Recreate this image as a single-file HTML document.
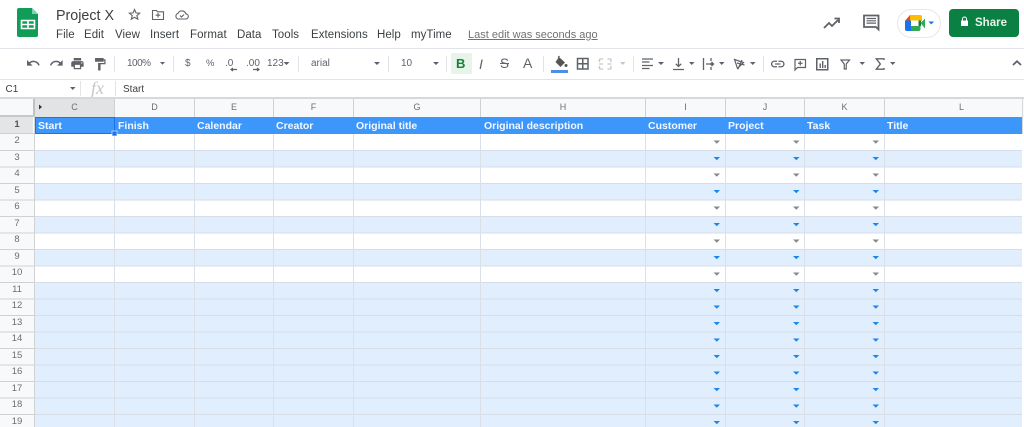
<!DOCTYPE html>
<html><head><meta charset="utf-8"><title>Project X</title>
<style>
html,body{margin:0;padding:0;background:#fff;}
#p{position:relative;width:1024px;height:427px;overflow:hidden;background:#fff;font-family:"Liberation Sans",sans-serif;color:#3c4043;filter:blur(.3px);}
#p div,#p span{position:absolute;white-space:nowrap;}
.m{top:28px;font-size:11.5px;line-height:14px;color:#3c4043;letter-spacing:.05px;}
.t{top:57px;font-size:10px;line-height:14px;color:#5f6368;}
.sep{top:56px;width:1px;height:16px;background:#e1e3e6;}
.ln{left:0;width:1024px;height:1px;background:#e1e3e8;}
.ch{top:98px;height:18px;line-height:18px;text-align:center;font-size:9px;color:#6b6e72;}
.rn{left:0;width:34px;text-align:center;font-size:9.500px;color:#6b6e72;height:16px;line-height:16px;}
.bh{top:117.500px;height:17px;line-height:17px;font-size:10.500px;font-weight:bold;color:#f2f8ff;}
.w{left:35px;width:987px;height:16.500px;background:#fff;}
.b{left:35px;width:987px;height:16.500px;background:#e1eefd;}
svg{position:absolute;left:0;top:0;}
</style></head><body><div id="p">
<div style="left:56px;top:6.500px;font-size:14.300px;line-height:18px;color:#3c4043;">Project X</div>
<div class="m" style="left:56px">File</div>
<div class="m" style="left:84px">Edit</div>
<div class="m" style="left:115px">View</div>
<div class="m" style="left:150px">Insert</div>
<div class="m" style="left:190px">Format</div>
<div class="m" style="left:237px">Data</div>
<div class="m" style="left:272px">Tools</div>
<div class="m" style="left:311px">Extensions</div>
<div class="m" style="left:377px">Help</div>
<div class="m" style="left:411px">myTime</div>
<div class="m" style="left:468px;color:#6f7276;text-decoration:underline;font-size:11px;letter-spacing:0;">Last edit was seconds ago</div>
<div style="left:949px;top:8.500px;width:69.500px;height:28px;background:#0b8043;border-radius:4px;"></div>
<div style="left:975px;top:14.500px;font-size:11.500px;line-height:16px;font-weight:bold;color:#e6f4ea;">Share</div>
<div style="left:897px;top:8.500px;width:41.500px;height:27px;border:1px solid #e6e8eb;border-radius:15px;"></div>
<div class="ln" style="top:48px"></div>
<div class="ln" style="top:79px"></div>
<div style="left:451px;top:53px;width:20.500px;height:21px;background:#e6f4ea;border-radius:2px;"></div>
<div class="t" style="left:127px;letter-spacing:-.5px">100%</div>
<div class="t" style="left:185px">$</div>
<div class="t" style="left:206px;font-size:9.500px">%</div>
<div class="t" style="left:225px">.0</div>
<div class="t" style="left:246px">.00</div>
<div class="t" style="left:267px">123</div>
<div class="t" style="left:311px">arial</div>
<div class="t" style="left:401px">10</div>
<div class="t" style="left:456px;top:55px;font-size:13px;font-weight:bold;line-height:18px;color:#188038;">B</div>
<div class="t" style="left:479px;top:55px;font-size:14px;font-style:italic;line-height:18px;">I</div>
<div class="t" style="left:500px;top:55px;font-size:13.500px;line-height:18px;text-decoration:line-through;">S</div>
<div class="t" style="left:523px;top:54px;font-size:14px;line-height:18px;">A</div>
<div class="sep" style="left:114px"></div><div class="sep" style="left:173px"></div><div class="sep" style="left:298px"></div><div class="sep" style="left:388px"></div><div class="sep" style="left:446px"></div><div class="sep" style="left:543px"></div><div class="sep" style="left:633px"></div><div class="sep" style="left:763px"></div>
<div style="left:550.500px;top:70px;width:17px;height:3px;background:#4a90e8;"></div>
<div style="left:5.500px;top:82.500px;font-size:10px;line-height:14px;color:#3c4043;">C1</div>
<div style="left:91px;top:79px;font-family:'Liberation Serif',serif;font-style:italic;font-size:18px;line-height:19px;color:#c4c6c9;">fx</div>
<div style="left:123px;top:82.500px;font-size:10px;line-height:14px;color:#3c4043;">Start</div>
<div class="sep" style="left:80px;top:81px;height:15px;background:#e3e4e6;"></div>
<div class="sep" style="left:115px;top:81px;height:15px;background:#e3e4e6;"></div>
<div style="left:0;top:97px;width:1024px;height:20px;background:#f8f9fa;"></div>
<div style="left:0;top:97px;width:1024px;height:2px;background:#d6d8da;"></div>
<div style="left:33px;top:99px;width:2px;height:18px;background:#bfc1c3;"></div>
<div style="left:35px;top:99px;width:79px;height:18px;background:#e2e3e5;"></div>
<div style="left:0;top:115px;width:35px;height:2px;background:#c6c8ca;"></div>
<div style="left:0;top:117px;width:33px;height:17px;background:#e4e5e7;"></div>
<div style="left:0;top:134px;width:34px;height:293px;background:#f8f9fa;"></div>
<div style="left:34px;top:117px;width:1px;height:310px;background:#d0d2d4;"></div>
<div class="ch" style="left:35px;width:79px">C</div><div class="ch" style="left:115px;width:79px">D</div><div class="ch" style="left:195px;width:78px">E</div><div class="ch" style="left:274px;width:79px">F</div><div class="ch" style="left:354px;width:126px">G</div><div class="ch" style="left:481px;width:164px">H</div><div class="ch" style="left:646px;width:79px">I</div><div class="ch" style="left:726px;width:78px">J</div><div class="ch" style="left:805px;width:79px">K</div><div class="ch" style="left:885px;width:153px">L</div>
<div class="rn" style="top:117px;font-weight:bold;color:#555">1</div>
<div class="rn" style="top:133px">2</div><div class="rn" style="top:150px">3</div><div class="rn" style="top:166px">4</div><div class="rn" style="top:183px">5</div><div class="rn" style="top:199px">6</div><div class="rn" style="top:216px">7</div><div class="rn" style="top:232px">8</div><div class="rn" style="top:249px">9</div><div class="rn" style="top:265px">10</div><div class="rn" style="top:282px">11</div><div class="rn" style="top:298px">12</div><div class="rn" style="top:315px">13</div><div class="rn" style="top:331px">14</div><div class="rn" style="top:348px">15</div><div class="rn" style="top:364px">16</div><div class="rn" style="top:381px">17</div><div class="rn" style="top:397px">18</div><div class="rn" style="top:414px">19</div>
<div style="left:35px;top:117px;width:987px;height:16.500px;background:#3d97fb;"></div>
<div class="w" style="top:133.500px"></div><div class="b" style="top:150px"></div><div class="w" style="top:166.500px"></div><div class="b" style="top:183px"></div><div class="w" style="top:199.500px"></div><div class="b" style="top:216px"></div><div class="w" style="top:232.500px"></div><div class="b" style="top:249px"></div><div class="w" style="top:265.500px"></div><div class="b" style="top:282px;height:145px"></div>
<div class="bh" style="left:38px">Start</div><div class="bh" style="left:118px">Finish</div><div class="bh" style="left:197px">Calendar</div><div class="bh" style="left:276px">Creator</div><div class="bh" style="left:356px">Original title</div><div class="bh" style="left:484px">Original description</div><div class="bh" style="left:648px">Customer</div><div class="bh" style="left:728px">Project</div><div class="bh" style="left:807px">Task</div><div class="bh" style="left:887px">Title</div>
<svg width="1024" height="427" viewBox="0 0 1024 427" fill="none">
<defs>
<g id="g"><path d="M713.500 140.500h6.500l-3.200 3.200z M793 140.500h6.500l-3.200 3.200z M872.500 140.500h6.500l-3.200 3.200z" fill="#85888c"/></g>
<g id="bl"><path d="M713.500 140.500h6.500l-3.200 3.200z M793 140.500h6.500l-3.200 3.200z M872.500 140.500h6.500l-3.200 3.200z" fill="#1a86ee"/></g>
</defs>
<path d="M35 150.500H1022M35 167H1022M35 183.500H1022M35 200H1022M35 216.500H1022M35 233H1022M35 249.500H1022M35 266H1022M35 282.500H1022M35 299H1022M35 315.500H1022M35 332H1022M35 348.500H1022M35 365H1022M35 381.500H1022M35 398H1022M35 414.500H1022" stroke="#d6dde6"/>
<path d="M114.500 134V427M194.500 134V427M273.500 134V427M353.500 134V427M480.500 134V427M645.500 134V427M725.500 134V427M804.500 134V427M884.500 134V427" stroke="#dbe0e6"/>
<path d="M114.500 99V117M194.500 99V117M273.500 99V117M353.500 99V117M480.500 99V117M645.500 99V117M725.500 99V117M804.500 99V117M884.500 99V117" stroke="#cfd1d3"/>
<path d="M0 133.500H34M0 150.500H34M0 167H34M0 183.500H34M0 200H34M0 216.500H34M0 233H34M0 249.500H34M0 266H34M0 282.500H34M0 299H34M0 315.500H34M0 332H34M0 348.500H34M0 365H34M0 381.500H34M0 398H34M0 414.500H34" stroke="#cfd1d3"/>
<path d="M1022.500 99V134" stroke="#d6d8da"/>
<rect x="35.500" y="117.500" width="79" height="16" stroke="#1a73e8"/>
<rect x="112" y="131" width="5" height="5" fill="#1a73e8" stroke="#fff" stroke-width=".6"/>
<path d="M39 104.500l3 2.500-3 2.500z" fill="#333"/>
<use href="#g"/><use href="#bl" y="16.500"/><use href="#g" y="33"/><use href="#bl" y="49.500"/><use href="#g" y="66"/><use href="#bl" y="82.500"/><use href="#g" y="99"/><use href="#bl" y="115.500"/><use href="#g" y="132"/>
<use href="#bl" y="148.500"/><use href="#bl" y="165"/><use href="#bl" y="181.500"/><use href="#bl" y="198"/><use href="#bl" y="214.500"/><use href="#bl" y="231"/><use href="#bl" y="247.500"/><use href="#bl" y="264"/><use href="#bl" y="280.500"/>
<path d="M19 8h13l6 6v21a2 2 0 0 1-2 2H19a2 2 0 0 1-2-2V10a2 2 0 0 1 2-2z" fill="#0f9d58"/>
<path d="M32 8l6 6h-6z" fill="#87ceac"/>
<path d="M21.500 20.500h13v8h-13z M28 20.500v8 M21.500 24.500h13" stroke="#fff" stroke-width="1.600"/>
<path d="M134.500 9.500l1.500 3.400 3.700.3-2.800 2.400.9 3.600-3.300-1.900-3.200 1.900.9-3.600-2.800-2.400 3.700-.3z" stroke="#5f6368" stroke-width="1.100"/>
<path d="M152.500 10.500h4l1 1.300h6v7.700h-11z M158 13v4.500 M155.700 15.200h4.600" stroke="#5f6368" stroke-width="1.100"/>
<path d="M179.500 19h6a2.600 2.600 0 0 0 .4-5.200 4.200 4.200 0 0 0-7.800-.5 2.900 2.900 0 0 0 1.400 5.700z M180 15.500l1.500 1.500 2.500-2.500" stroke="#5f6368" stroke-width="1.100"/>
<path d="M824 28l5-5 3 3 6-6 M834.500 18.500h4.500v4.500" stroke="#5f6368" stroke-width="1.800"/>
<path d="M864 15.500h14.500v14l-2.500-2.500h-12z" stroke="#5f6368" stroke-width="1.800"/>
<path d="M866.500 18.500h9.500M866.500 20.800h9.500M866.500 23.100h9.500" stroke="#5f6368" stroke-width="1.200"/>
<path d="M905 21l5-6h10a2 2 0 0 1 2 2v4z" fill="#fbbc04"/>
<path d="M905 21l5-6v6z" fill="#ea4335"/>
<path d="M905 20.500h6v10.500h-4a2 2 0 0 1-2-2z" fill="#1a73e8"/>
<path d="M911 25.500h9.500v3.500a2 2 0 0 1-2 2H911z" fill="#34a853"/>
<path d="M911 20.500h7.500v5.500H911z" fill="#fff"/>
<path d="M918.500 20.500h2.500v5.500h-2.500z" fill="#188038"/>
<path d="M920.500 23l4.500-4.500v10z" fill="#34a853"/>
<path d="M928.500 21.500h5.500l-2.750 3z" fill="#1a73e8"/>
<path d="M961 20.500h7v5.500h-7z" fill="#fff"/><path d="M962.500 20.500v-1.500a2 2 0 0 1 4 0v1.500" stroke="#fff" stroke-width="1"/>
<g fill="#5f6368">
<g transform="translate(25.760 55.660) scale(.62)"><path d="M12.500 8c-2.650 0-5.050.99-6.900 2.600L2 7v9h9l-3.620-3.620c1.390-1.160 3.160-1.880 5.120-1.880 3.540 0 6.550 2.310 7.600 5.500l2.370-.78C21.080 11.030 17.150 8 12.500 8z"/></g>
<g transform="translate(49 55.660) scale(.62)"><path d="M18.400 10.600C16.550 8.990 14.150 8 11.500 8c-4.650 0-8.580 3.030-9.960 7.220L3.900 16c1.050-3.190 4.050-5.500 7.600-5.500 1.950 0 3.730.72 5.120 1.880L13 16h9V7l-3.600 3.600z"/></g>
<g transform="translate(70 56.200) scale(.62)"><path d="M19 8H5c-1.660 0-3 1.340-3 3v6h4v4h12v-4h4v-6c0-1.660-1.340-3-3-3zm-3 11H8v-5h8v5zm3-7c-.55 0-1-.45-1-1s.45-1 1-1 1 .45 1 1-.45 1-1 1zm-1-9H6v4h12V3z"/></g>
<g transform="translate(92.500 56.800) scale(.62)"><path d="M18 4V3c0-.55-.45-1-1-1H5c-.55 0-1 .45-1 1v4c0 .55.45 1 1 1h12c.55 0 1-.45 1-1V6h1v4H9v11c0 .55.45 1 1 1h2c.55 0 1-.45 1-1v-9h8V4h-3z"/></g>
<g transform="translate(769.600 55.840) scale(.68)"><path d="M3.900 12c0-1.710 1.390-3.100 3.100-3.100h4V7H7c-2.760 0-5 2.240-5 5s2.240 5 5 5h4v-1.900H7c-1.710 0-3.100-1.390-3.100-3.100zM8 13h8v-2H8v2zm9-6h-4v1.900h4c1.710 0 3.100 1.390 3.100 3.100s-1.390 3.100-3.100 3.100h-4V17h4c2.760 0 5-2.240 5-5s-2.240-5-5-5z"/></g>
<path d="M160 62h5l-2.500 2.800z M283.500 62h6l-3 3z M374 62h6l-3 3z M433 62h6l-3 3z M658 62h6l-3 3z M689 62h5.500l-2.750 3z M719 62h5.500l-2.750 3z M750 62h5.500l-2.750 3z M859.500 62h5.500l-2.750 3z M890 62h5.500l-2.750 3z"/>
<path d="M70 87h5.500l-2.750 3z"/>
</g>
<path d="M620 62h5.500l-2.750 3z" fill="#c4c6c9"/>
<path d="M231 69.500h6M233 68l-2 1.500 2 1.500M253 69.500h6M257 68l2 1.500-2 1.500" stroke="#5f6368" stroke-width="1.200"/>
<path d="M559 57l6 5.500-4.500 4.500-5-5z" fill="#555"/>
<path d="M558 57.500l1.500-1.500" stroke="#555" stroke-width="1.200"/>
<circle cx="566" cy="65.500" r="1.500" fill="#555"/>
<path d="M577.500 58.500h10.500v10.500h-10.500z M582.750 58.500v10.500 M577.500 63.750h10.500" stroke="#5f6368" stroke-width="1.500"/>
<path d="M599.500 59h3.500M607.500 59h3.500M599.500 69h3.500M607.500 69h3.500M599.500 59v3M611 59v3M599.500 66v3M611 66v3M599 64h4M607.500 64h4" stroke="#c4c6c9" stroke-width="1.300"/>
<path d="M642 59h11M642 62h7.500M642 65.500h11M642 68.500h7.500" stroke="#5f6368" stroke-width="1.300"/>
<path d="M673 69.500h11M678.500 58v8M675.800 63.800l2.700 2.700 2.700-2.700" stroke="#5f6368" stroke-width="1.300"/>
<path d="M703.500 58v12M711 58v3M711 63v2M711 67v3M706 64h7.500M711.500 62l2 2-2 2" stroke="#5f6368" stroke-width="1.300"/>
<path d="M734.500 59.500l9 3-6 6z M742 60l-4 9M737 63l7.500 2" stroke="#5f6368" stroke-width="1.200"/>
<path d="M795 59.500h10.500v8h-8l-2.500 2.500z M800.250 61v4.500M798 63.250h4.500" stroke="#5f6368" stroke-width="1.200"/>
<path d="M816.750 58.750h11v11h-11z" stroke="#5f6368" stroke-width="1.500"/><path d="M819.500 63.500h1.400v4.500h-1.400z M822 61h1.400v7h-1.400z M824.500 65h1.400v3h-1.400z" fill="#5f6368"/>
<path d="M841 60h8.500l-3.250 4v5h-2v-5z" stroke="#5f6368" stroke-width="1.200"/>
<path d="M884 60v-1.200h-7.700l4 5.200-4 5.200h7.700v-1.200" stroke="#5f6368" stroke-width="1.400"/>
<path d="M1013 65l4-3.800 4 3.800" stroke="#5f6368" stroke-width="1.800"/>
</svg>
</div></body></html>
